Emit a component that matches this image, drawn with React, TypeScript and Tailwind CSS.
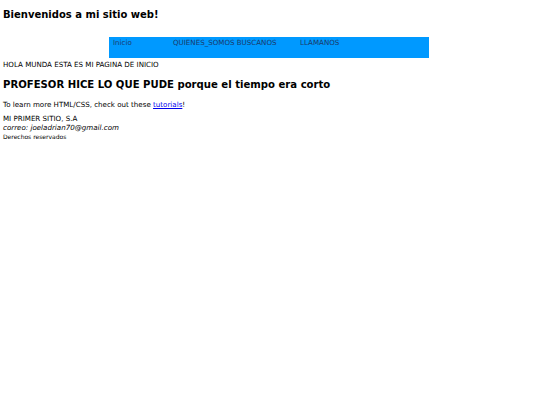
export default function App() {
  return (
    <div className="min-h-[405px] bg-white text-black font-['DejaVu_Sans',Verdana,sans-serif] px-[3px] text-[7.1px] leading-[9px]">
      <h1 className="pt-[9px] text-[10px] leading-[12px] font-bold">Bienvenidos a mi sitio web!</h1>
      <nav className="mt-[16px] ml-[106px] w-[320px] h-[21px] bg-[#0099ff] flex items-start pt-[1px] text-[#1a3a6b] leading-[9px]">
        <a className="ml-[4px] w-[60px]">Inicio</a>
        <a className="w-[127px]">QUIENES_SOMOS BUSCANOS</a>
        <a>LLAMANOS</a>
      </nav>
      <p className="mt-[2px] leading-[9px]">HOLA MUNDA ESTA ES MI PAGINA DE INICIO</p>
      <h2 className="mt-[9px] text-[10.1px] leading-[13px] font-bold">PROFESOR HICE LO QUE PUDE porque el tiempo era corto</h2>
      <p className="mt-[9px] leading-[9px]">
        To learn more HTML/CSS, check out these{" "}
        <a className="text-[#0000ee] underline">tutorials</a>!
      </p>
      <footer className="mt-[5px]">
        <p className="leading-[9px]">MI PRIMER SITIO, S.A</p>
        <p className="italic leading-[9px]">correo: joeladrian70@gmail.com</p>
        <p className="text-[6px] leading-[9px]">Derechos reservados</p>
      </footer>
    </div>
  );
}
